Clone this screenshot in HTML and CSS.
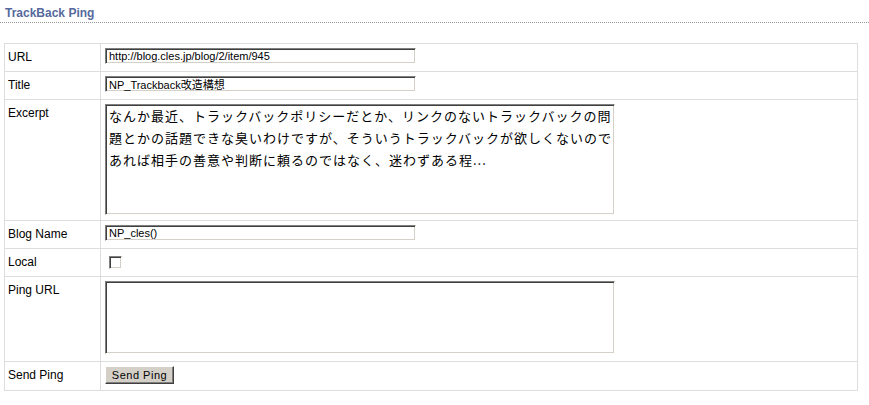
FILE: index.html
```html
<!DOCTYPE html>
<html lang="ja">
<head>
<meta charset="utf-8">
<title>TrackBack Ping</title>
<link rel="stylesheet" href="styles.css">
</head>
<body>
<h2 class="title">TrackBack Ping</h2>
<table class="ping-table">
  <colgroup><col class="col-label"><col class="col-value"></colgroup>
  <tr>
    <td class="label">URL</td>
    <td class="val"><input class="field" type="text" value="http://blog.cles.jp/blog/2/item/945"></td>
  </tr>
  <tr>
    <td class="label">Title</td>
    <td class="val"><input class="field" type="text" value="NP_Trackback改造構想"></td>
  </tr>
  <tr>
    <td class="label">Excerpt</td>
    <td class="val"><textarea class="area area-excerpt">なんか最近、トラックバックポリシーだとか、リンクのないトラックバックの問題とかの話題できな臭いわけですが、そういうトラックバックが欲しくないのであれば相手の善意や判断に頼るのではなく、迷わずある程...</textarea></td>
  </tr>
  <tr>
    <td class="label">Blog Name</td>
    <td class="val"><input class="field" type="text" value="NP_cles()"></td>
  </tr>
  <tr>
    <td class="label">Local</td>
    <td class="val"><input class="check" type="checkbox"></td>
  </tr>
  <tr>
    <td class="label">Ping URL</td>
    <td class="val"><textarea class="area area-ping"></textarea></td>
  </tr>
  <tr>
    <td class="label">Send Ping</td>
    <td class="val"><button class="btn" type="button">Send Ping</button></td>
  </tr>
</table>
</body>
</html>
```
FILE: styles.css
```css
html, body {
  margin: 0;
  padding: 0;
  background: #fff;
}
body {
  font-family: "Liberation Sans", "Noto Sans CJK JP", sans-serif;
  font-size: 12px;
  color: #000;
}
.title {
  margin: 0;
  padding: 6px 5px 2px;
  font-size: 12px;
  line-height: 14px;
  font-weight: bold;
  color: #56699c;
  border-bottom: 1px dotted #999;
}
.ping-table {
  margin: 20px 0 0 4px;
  width: 854px;
  table-layout: fixed;
  border-collapse: collapse;
  border: 1px solid #ddd;
}
.col-label { width: 96px; }
.ping-table td {
  border: 1px solid #ddd;
  vertical-align: top;
  padding: 4px;
}
.ping-table td.label {
  padding: 6px 3px 0;
  line-height: 14px;
}
.field, .area {
  display: block;
  box-sizing: border-box;
  margin: 0 0 4px;
  border: 1px solid;
  border-color: #808080 #fff #fff #808080;
  box-shadow: inset 1px 1px 0 #404040, inset -1px -1px 0 #d4d0c8;
  background: #fff;
  color: #000;
  outline: none;
}
.field {
  width: 311px;
  height: 16px;
  margin-bottom: 3px;
  padding: 0 2px 0 3px;
  font-family: "Liberation Sans", "Noto Sans CJK JP", sans-serif;
  font-size: 11px;
  line-height: 14px;
}
.area {
  width: 510px;
  padding: 0 0 0 3px;
  resize: none;
  overflow: hidden;
  font-family: "Noto Sans CJK JP", "Liberation Sans", sans-serif;
  font-size: 13px;
  letter-spacing: 1px;
  line-height: 22px;
}
.area-excerpt {
  height: 111px;
  margin-bottom: 1px;
}
.area-ping {
  height: 73px;
  margin-bottom: 3px;
}
.check {
  display: block;
  appearance: none;
  -webkit-appearance: none;
  box-sizing: border-box;
  width: 13px;
  height: 13px;
  margin: 3px 0 3px 4px;
  border: 1px solid;
  border-color: #808080 #fff #fff #808080;
  box-shadow: inset 1px 1px 0 #404040, inset -1px -1px 0 #d4d0c8;
  background: #fff;
}
.btn {
  display: block;
  box-sizing: border-box;
  width: 69px;
  height: 18px;
  margin: 0 0 2px;
  padding: 0;
  border: 1px solid;
  border-color: #fff #404040 #404040 #fff;
  box-shadow: inset -1px -1px 0 #808080;
  background: #d4d0c8;
  color: #000;
  font-family: "Liberation Sans", sans-serif;
  font-size: 11px;
  letter-spacing: 0.5px;
}
```
